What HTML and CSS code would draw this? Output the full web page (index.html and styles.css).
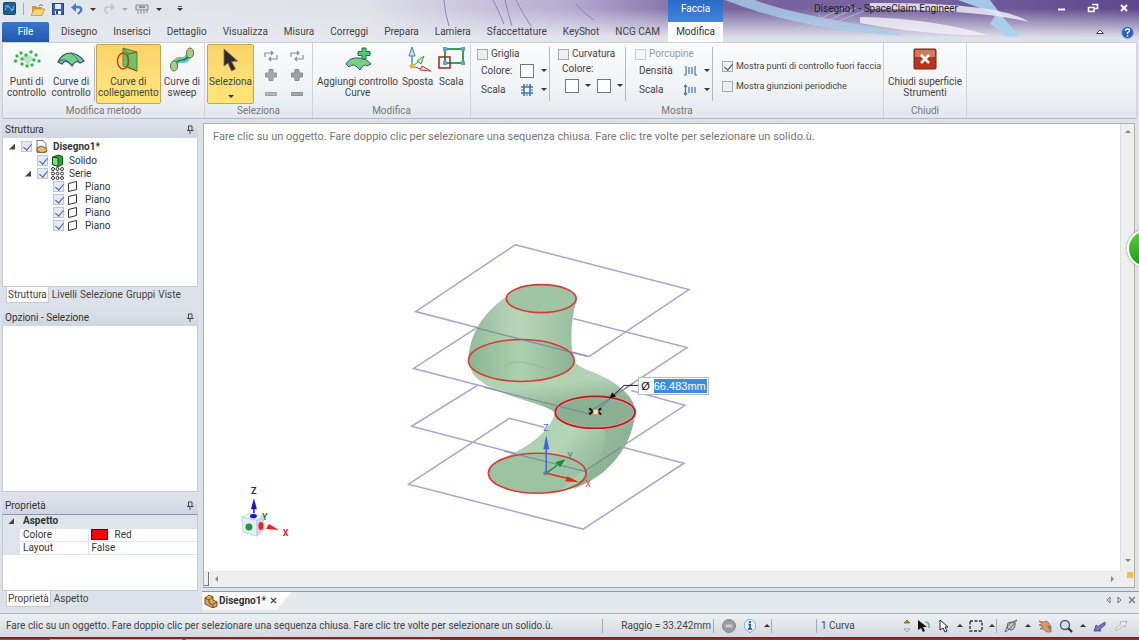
FILE: index.html
```html
<!DOCTYPE html>
<html lang="it">
<head>
    <meta charset="UTF-8">
    <meta name="viewport" content="width=device-width, initial-scale=1.0">
    <title>Disegno1 - SpaceClaim Engineer</title>
    <link rel="stylesheet" href="styles.css">
</head>
<body>
    <header class="header">
        <svg class="header-art" viewBox="0 0 1139 42" preserveAspectRatio="none">
            <path d="M444 0Q445 14 449 26M493 0Q500 14 504 24M505 0Q508 14 512 26M516 0Q524 16 531 26M576 4Q584 14 594 20" fill="none" stroke="#8d84bb" stroke-width="1"/>
            <path d="M725 0H755Q790 14 880 28L905 36Q800 30 725 0Z" fill="#a9cdea" opacity=".8"/>
            <path d="M958 0H990Q1000 14 1019 36L1008 37L990 24L996 14Z" fill="#a9d4ee" opacity=".9"/>
            <path d="M870 3Q1000 2 1029 22Q980 10 870 9Z" fill="#eceaf6" opacity=".85"/>
            <path d="M860 17Q930 18 988 35Q930 36 860 23Z" fill="#f2f1f8" opacity=".8"/>
            <path d="M795 30L850 5M802 32L856 8M812 32L866 10M818 14L835 28" stroke="#c9bfe0" stroke-width="1" opacity=".7"/>
        </svg>
        <div class="title-row">
            <div class="quick-access">
                <svg width="13" height="14" viewBox="0 0 13 14"><rect x=".5" y=".5" width="12" height="12" rx="1" fill="#1f5f99" stroke="#174777"/><path d="M2 8Q5 2 7 6T11 4M2 4h4M8 9l3-2" stroke="#77c6e6" fill="none"/></svg>
                <span class="qa-line"></span>
                <button class="qa-btn" aria-label="Apri"><svg width="14" height="13" viewBox="0 0 14 13"><path d="M1 3h4l1 1h5v8H1z" fill="#d99a2b"/><path d="M3 6h11l-3 6.500H0z" fill="#f6d27a" stroke="#c18a2c" stroke-width=".7"/><path d="M8 3q2-3 4 0" stroke="#4d7db0" fill="none"/></svg></button>
                <button class="qa-btn" aria-label="Salva"><svg width="12" height="12" viewBox="0 0 12 12"><rect x=".5" y=".5" width="11" height="11" fill="#3b5fb4" stroke="#2a4386"/><rect x="3" y="1" width="6" height="5" fill="#dfe9fa"/><rect x="3" y="8" width="6" height="3.500" fill="#fff"/><rect x="4" y="8" width="2" height="3" fill="#2a4386"/></svg></button>
                <button class="qa-btn" aria-label="Annulla"><svg width="12" height="12" viewBox="0 0 12 12"><path d="M3 4h4q4 0 3 4l-3 3" fill="none" stroke="#3f80d3" stroke-width="2.400"/><path d="M0 4.500L5 0v9z" fill="#3f80d3"/></svg></button>
                <i class="arrow"></i>
                <button class="qa-btn" aria-label="Ripeti"><svg width="12" height="12" viewBox="0 0 12 12"><path d="M9 4H5Q1 4 2 8l3 3" fill="none" stroke="#c3c7cd" stroke-width="1.500"/><path d="M12 4L8 0v8z" fill="#c3c7cd"/></svg></button>
                <i class="arrow pale"></i>
                <button class="qa-btn" aria-label="Stampa"><svg width="14" height="12" viewBox="0 0 14 12"><path d="M1 2h12v5H1zM3 8v3M6 7v4M9 7v4M12 7v3" stroke="#8b8f96" fill="#d5d7db"/><path d="M4 4h6" stroke="#555"/></svg></button>
                <i class="arrow"></i>
                <i class="arrow more"></i>
            </div>
            <h1 class="title">Disegno1 - SpaceClaim Engineer</h1>
            <div class="window-buttons">
                <button aria-label="Riduci"><svg width="12" height="12" viewBox="0 0 12 12"><path d="M2 7.500h7" stroke="#fff" stroke-width="2"/></svg></button>
                <button aria-label="Ripristina"><svg width="12" height="12" viewBox="0 0 12 12"><path d="M5 2.500h5.500v4H8" stroke="#fff" fill="none" stroke-width="1.600"/><path d="M1.500 5.500H7V9.500H1.500z" stroke="#fff" fill="none" stroke-width="1.600"/></svg></button>
                <button aria-label="Chiudi"><svg width="12" height="12" viewBox="0 0 12 12"><path d="M3 3l6 6M9 3l-6 6" stroke="#fff" stroke-width="2"/></svg></button>
            </div>
        </div>
        <nav class="tabs">
            <button class="tab file">File</button>
            <button class="tab">Disegno</button>
            <button class="tab">Inserisci</button>
            <button class="tab">Dettaglio</button>
            <button class="tab">Visualizza</button>
            <button class="tab">Misura</button>
            <button class="tab">Correggi</button>
            <button class="tab">Prepara</button>
            <button class="tab">Lamiera</button>
            <button class="tab">Sfaccettature</button>
            <button class="tab">KeyShot</button>
            <button class="tab">NCG CAM</button>
            <div class="context">
                <span class="context-name">Faccia</span>
                <button class="tab active">Modifica</button>
            </div>
            <div class="tabs-end">
                <svg width="10" height="8" viewBox="0 0 10 8"><path d="M1.500 5.500L5 2l3.500 3.500z" fill="#fff" stroke="#444"/></svg>
                <svg width="13" height="13" viewBox="0 0 13 13"><circle cx="6.500" cy="6.500" r="6" fill="#2b62b5" stroke="#8fb4e2"/><path d="M4.500 5q0-2 2-2t2 1.700q0 1-2 2V8M6.500 9v1.500" stroke="#fff" stroke-width="1.400" fill="none"/></svg>
            </div>
        </nav>
    </header>

    <section class="ribbon">
        <div class="group metodo">
            <div class="group-body">
                <button class="tool">
                    <svg width="28" height="26" viewBox="0 0 28 26"><path d="M8 11l6-4 7 4-6 7z" fill="#b9e6c2"/><g fill="#38b34a"><circle cx="2.500" cy="14" r="1.700"/><circle cx="4" cy="9" r="1.700"/><circle cx="8" cy="6" r="1.700"/><circle cx="13" cy="8" r="1.700"/><circle cx="18" cy="5" r="1.700"/><circle cx="23" cy="8" r="1.700"/><circle cx="26" cy="14" r="1.700"/><circle cx="9" cy="12" r="1.700"/><circle cx="21" cy="13" r="1.700"/><circle cx="9" cy="17" r="1.700"/><circle cx="14" cy="19" r="1.700"/><circle cx="19" cy="18" r="1.700"/></g></svg>
                    <span>Punti di<br>controllo</span>
                </button>
                <button class="tool">
                    <svg width="28" height="26" viewBox="0 0 28 26"><path d="M1 15Q5 6 14 6Q22 7 27 14L23 16Q19 12 15 19Q9 11 5 17z" fill="#7ccf7f" stroke="#2a4f86" stroke-width="1.200"/><path d="M1 15Q9 9 15 19M14 6Q18 8 23 16" fill="none" stroke="#2b62b5"/></svg>
                    <span>Curve di<br>controllo</span>
                </button>
                <span class="divider"></span>
                <button class="tool selected">
                    <svg width="28" height="26" viewBox="0 0 28 26"><path d="M9 1l14 4v19L9 19z" fill="#63c763" stroke="#8f6a26"/><path d="M9 1l5 6v12" fill="none" stroke="#3f8c3f"/><ellipse cx="9" cy="14" rx="5.500" ry="8" fill="none" stroke="#c2371e" stroke-width="1.400"/><path d="M14 7l9-2M14 20l9 4" stroke="#c2371e"/></svg>
                    <span>Curve di<br>collegamento</span>
                </button>
                <button class="tool">
                    <svg width="28" height="26" viewBox="0 0 28 26"><path d="M6 18Q9 12 14 13T22 5" fill="none" stroke="#62cf8c" stroke-width="6"/><path d="M6 20Q8 13 14 13T22 5" fill="none" stroke="#24579b" stroke-width="1.200"/><ellipse cx="6" cy="19" rx="3.500" ry="5" fill="#8edb8e" stroke="#a8512b"/><ellipse cx="22" cy="6" rx="3.500" ry="5" fill="#8edb8e" stroke="#a8512b"/></svg>
                    <span>Curve di<br>sweep</span>
                </button>
            </div>
            <h2>Modifica metodo</h2>
        </div>
        <div class="group seleziona">
            <div class="group-body">
                <button class="tool selected">
                    <svg width="28" height="26" viewBox="0 0 28 26"><path d="M7 2v17l4-3 3.500 8 4-2-4-7.500 6-.500z" fill="#2f2b2b" stroke="#7b6a4a" stroke-width=".8"/></svg>
                    <span>Seleziona</span>
                    <i class="arrow"></i>
                </button>
                <div class="mini-grid">
                    <svg width="14" height="12" viewBox="0 0 14 12"><path d="M1 7V3h8M7 1l2 2-2 2M13 5v4H5M7 7L5 9l2 2" fill="none" stroke="#8a8a8a" stroke-width="1.200"/></svg>
                    <svg width="14" height="12" viewBox="0 0 14 12"><path d="M1 7V3h8M7 1l2 2-2 2M13 5v4H5M7 7L5 9l2 2" fill="none" stroke="#8a8a8a" stroke-width="1.200"/></svg>
                    <svg width="12" height="12" viewBox="0 0 12 12"><path d="M4 .500h4V4h3.500v4H8v3.500H4V8H.500V4H4z" fill="#a8a8a8" stroke="#929292"/></svg>
                    <svg width="12" height="12" viewBox="0 0 12 12"><path d="M4 .500h4V4h3.500v4H8v3.500H4V8H.500V4H4z" fill="#a0a0a0" stroke="#888"/></svg>
                    <svg width="12" height="12" viewBox="0 0 12 12"><path d="M.500 4.500h11v3H.500z" fill="#b8b8b8" stroke="#a0a0a0"/></svg>
                    <svg width="12" height="12" viewBox="0 0 12 12"><path d="M.500 4.500h11v3H.500z" fill="#a8a8a8" stroke="#909090"/></svg>
                </div>
            </div>
            <h2>Seleziona</h2>
        </div>
        <div class="group modifica">
            <div class="group-body">
                <button class="tool">
                    <svg width="28" height="26" viewBox="0 0 28 26"><path d="M2 17Q6 10 14 11Q22 11 27 17L23 19Q20 16 16 23Q10 15 5 20z" fill="#7ccf7f" stroke="#2a4f86"/><path d="M18 1h4v3.500h4v4h-4V12h-4V8.500h-4v-4h4z" fill="#52c978" stroke="#1e7237"/></svg>
                    <span>Aggiungi controllo<br>Curve</span>
                </button>
                <button class="tool">
                    <svg width="28" height="26" viewBox="0 0 28 26"><path d="M8 20V8" stroke="#5c8ac6" stroke-width="1.500"/><path d="M8 0l3 9H5z" fill="#cfe1f5" stroke="#4b7dbb"/><path d="M8 20l7-6" stroke="#4c9a4c"/><path d="M20 9l-3 8-4-3z" fill="#c7ebc4" stroke="#4c9a4c"/><path d="M8 19l9 3" stroke="#b5433b"/><path d="M27 24l-11-1 2-4z" fill="#f7d5d0" stroke="#b5433b"/><circle cx="8" cy="19" r="2.500" fill="#d8b84c"/></svg>
                    <span>Sposta</span>
                </button>
                <button class="tool">
                    <svg width="28" height="26" viewBox="0 0 28 26"><path d="M8 2h18v14H8z" fill="none" stroke="#2ba555" stroke-width="2"/><path d="M2 10h11v11H2z" fill="none" stroke="#982a2a" stroke-width="1.500"/><g fill="#6f9bd8"><path d="M6 0h4v4H6zM24 0h4v4h-4zM24 14h4v4h-4zM6 14h4v4H6z"/></g></svg>
                    <span>Scala</span>
                </button>
            </div>
            <h2>Modifica</h2>
        </div>
        <div class="group mostra">
            <div class="group-body">
                <div class="option-set griglia">
                    <label class="check"><input type="checkbox"> Griglia</label>
                    <div class="option"><span>Colore:</span><button class="swatch" aria-label="Colore griglia"></button><i class="arrow"></i></div>
                    <div class="option"><span>Scala</span><svg width="14" height="14" viewBox="0 0 14 14"><path d="M4 1v12M10 1v12M1 4h12M1 10h12" stroke="#3b73b9" stroke-width="1.600"/><path d="M5 5h4v4H5z" fill="#fff"/><path d="M7 1v2M7 11v2M1 7h2M11 7h2" stroke="#3b73b9"/></svg><i class="arrow"></i></div>
                </div>
                <span class="divider"></span>
                <div class="option-set curvatura">
                    <label class="check"><input type="checkbox"> Curvatura</label>
                    <div class="option"><span>Colore:</span></div>
                    <div class="option swatches"><button class="swatch" aria-label="Colore minimo"></button><i class="arrow"></i><button class="swatch" aria-label="Colore massimo"></button><i class="arrow"></i></div>
                </div>
                <span class="divider"></span>
                <div class="option-set porcupine">
                    <label class="check disabled"><input type="checkbox" disabled> Porcupine</label>
                    <div class="option"><span>Densità</span><svg width="14" height="12" viewBox="0 0 14 12"><path d="M3 1v9H1M6 2v7M9 2v7M12 1v9h2" stroke="#3b73b9" fill="none" stroke-width="1.200"/></svg><i class="arrow"></i></div>
                    <div class="option"><span>Scala</span><svg width="14" height="12" viewBox="0 0 14 12"><path d="M2.500 1v10M1 3l1.500-2L4 3M1 9l1.500 2L4 9M6 3v6M9 3v6M12 3v6" stroke="#3b73b9" fill="none" stroke-width="1.200"/></svg><i class="arrow"></i></div>
                </div>
                <span class="divider"></span>
                <div class="option-set punti">
                    <label class="check"><input type="checkbox" checked> Mostra punti di controllo fuori faccia</label>
                    <label class="check"><input type="checkbox"> Mostra giunzioni periodiche</label>
                </div>
            </div>
            <h2>Mostra</h2>
        </div>
        <div class="group chiudi">
            <div class="group-body">
                <button class="tool">
                    <svg width="28" height="26" viewBox="0 0 28 26"><rect x="3" y="2" width="22" height="20" rx="1" fill="#b8341c" stroke="#7b2414"/><path d="M4 3h20v7H4z" fill="#cf7a62"/><path d="M10 8l8 8M18 8l-8 8" stroke="#fff" stroke-width="2.500"/></svg>
                    <span>Chiudi superficie<br>Strumenti</span>
                </button>
            </div>
            <h2>Chiudi</h2>
        </div>
    </section>

    <main class="main">
        <aside class="sidebar">
            <section class="panel struttura">
                <h3>Struttura <svg width="8" height="9" viewBox="0 0 8 9"><path d="M2.500 1v4M6 1v4M2 1h4M1 5.500h6.500M4 6v3" stroke="#444" fill="none"/></svg></h3>
                <ul class="tree">
                    <li class="root"><i class="twist"></i><input type="checkbox" id="t1" checked><svg width="13" height="13" viewBox="0 0 13 13"><path d="M2 .500h6l3 3v9H2z" fill="#fff" stroke="#777"/><path d="M2 8l4-2 5 2 1 3-5 2-5-2z" fill="#e8b67a" stroke="#8a5a2a"/></svg><label for="t1">Disegno1*</label></li>
                    <li class="level-2"><i class="twist none"></i><input type="checkbox" id="t2" checked><svg width="13" height="13" viewBox="0 0 13 13"><path d="M1.500 3l6-2 4 1.500v8l-4 2-6-2z" fill="#29a832" stroke="#134f17"/><path d="M1.500 3l5.500 1v8.500l-5.500-2z" fill="#7be07f" stroke="#134f17"/></svg><label for="t2">Solido</label></li>
                    <li class="level-2"><i class="twist"></i><input type="checkbox" id="t3" checked><svg width="13" height="13" viewBox="0 0 13 13"><g fill="#fff" stroke="#333"><circle cx="2" cy="2" r="1.500"/><circle cx="6.500" cy="2" r="1.500"/><circle cx="11" cy="2" r="1.500"/><circle cx="2" cy="6.500" r="1.500"/><circle cx="6.500" cy="6.500" r="1.500"/><circle cx="11" cy="6.500" r="1.500"/><circle cx="2" cy="11" r="1.500"/><circle cx="6.500" cy="11" r="1.500"/><circle cx="11" cy="11" r="1.500"/></g></svg><label for="t3">Serie</label></li>
                    <li class="level-3"><i class="twist none"></i><input type="checkbox" id="t4" checked><svg width="13" height="13" viewBox="0 0 13 13"><path d="M1.500 3.500l8-2v8l-8 2z" fill="#fff" stroke="#333"/></svg><label for="t4">Piano</label></li>
                    <li class="level-3"><i class="twist none"></i><input type="checkbox" id="t5" checked><svg width="13" height="13" viewBox="0 0 13 13"><path d="M1.500 3.500l8-2v8l-8 2z" fill="#fff" stroke="#333"/></svg><label for="t5">Piano</label></li>
                    <li class="level-3"><i class="twist none"></i><input type="checkbox" id="t6" checked><svg width="13" height="13" viewBox="0 0 13 13"><path d="M1.500 3.500l8-2v8l-8 2z" fill="#fff" stroke="#333"/></svg><label for="t6">Piano</label></li>
                    <li class="level-3"><i class="twist none"></i><input type="checkbox" id="t7" checked><svg width="13" height="13" viewBox="0 0 13 13"><path d="M1.500 3.500l8-2v8l-8 2z" fill="#fff" stroke="#333"/></svg><label for="t7">Piano</label></li>
                </ul>
                <div class="panel-tabs">
                    <button class="active">Struttura</button>
                    <button>Livelli</button>
                    <button>Selezione</button>
                    <button>Gruppi</button>
                    <button>Viste</button>
                </div>
            </section>
            <section class="panel opzioni">
                <h3>Opzioni - Selezione <svg width="8" height="9" viewBox="0 0 8 9"><path d="M2.500 1v4M6 1v4M2 1h4M1 5.500h6.500M4 6v3" stroke="#444" fill="none"/></svg></h3>
                <div class="panel-body"></div>
            </section>
            <section class="panel proprieta">
                <h3>Proprietà <svg width="8" height="9" viewBox="0 0 8 9"><path d="M2.500 1v4M6 1v4M2 1h4M1 5.500h6.500M4 6v3" stroke="#444" fill="none"/></svg></h3>
                <div class="panel-body">
                    <table class="props">
                        <tr class="props-head"><td><i class="twist"></i></td><th colspan="2">Aspetto</th></tr>
                        <tr><td></td><td>Colore</td><td><span class="red-box"></span>Red</td></tr>
                        <tr><td></td><td>Layout</td><td>False</td></tr>
                    </table>
                </div>
                <div class="panel-tabs">
                    <button class="active">Proprietà</button>
                    <button>Aspetto</button>
                </div>
            </section>
        </aside>

        <div class="work">
            <div class="viewport">
                <div class="canvas">
                    <p class="hint">Fare clic su un oggetto. Fare doppio clic per selezionare una sequenza chiusa. Fare clic tre volte per selezionare un solido.ù.</p>
                    <svg class="scene" viewBox="205 124 916 448">
                        <defs>
                            <linearGradient id="upper" x1="0" x2="1">
                                <stop offset="0" stop-color="#94b998"/>
                                <stop offset=".45" stop-color="#b9d6bb"/>
                                <stop offset="1" stop-color="#98bd9c"/>
                            </linearGradient>
                            <linearGradient id="lower" x1="0" y1="0" x2="1" y2=".5">
                                <stop offset="0" stop-color="#9cc3a1"/>
                                <stop offset=".55" stop-color="#b5d6b9"/>
                                <stop offset="1" stop-color="#86aa8b"/>
                            </linearGradient>
                            <linearGradient id="arm" x1="0" y1="0" x2=".3" y2="1">
                                <stop offset="0" stop-color="#a5c9a9"/>
                                <stop offset=".6" stop-color="#b4d3b6"/>
                                <stop offset="1" stop-color="#87a98c"/>
                            </linearGradient>
                            <linearGradient id="cut" x1="0" x2="1">
                                <stop offset="0" stop-color="#83b38b"/>
                                <stop offset=".5" stop-color="#a8cfac"/>
                                <stop offset="1" stop-color="#87ae8d"/>
                            </linearGradient>
                        </defs>
                        <!-- piani -->
                        <g fill="none" stroke="#a7a5d1" stroke-width="1.500">
                            <path d="M516 245L690 290L590 357L416 312Z"/>
                            <path d="M476 329L414 369L588 414L688 348L574 319"/>
                            <path d="M478 386L412 427L585 472L686 406L632 391"/>
                            <path d="M545 428L510 419L409 485L584 530L685 464L620 447"/>
                        </g>
                        <!-- solido -->
                        <path d="M556 412C553 430 530 449 500 460L489 474C489 488 520 494 550 493C570 493 590 484 604 473C622 458 634 438 636 413Z" fill="url(#lower)"/>
                        <path d="M469 360C470 378 485 386 505 394C525 402 545 405 557 414C580 424 625 428 636 413C637 396 614 380 592 372C582 368 577 366 574 360C550 340 490 340 469 360Z" fill="url(#arm)"/>
                        <path d="M507 297C488 311 472 328 469 358C480 390 560 390 575 364C570 342 572 318 578 299Z" fill="url(#upper)"/>
                        <path d="M604 428C610 445 602 464 574 490C606 478 632 450 636 415C626 424 616 428 604 428Z" fill="#8fb394" opacity=".7"/>
                        <ellipse cx="542" cy="299" rx="35" ry="14" fill="#9fc5a5" stroke="#d83a36" stroke-width="1.600"/>
                        <ellipse cx="522" cy="361" rx="53" ry="21" fill="url(#cut)" fill-opacity=".75" stroke="#d83a36" stroke-width="1.600"/>
                        <path d="M505 367Q512 361 524 363T550 370" fill="none" stroke="#87aa8c" opacity=".6"/>
                        <ellipse cx="538" cy="474" rx="49" ry="20" fill="#9cc4a2" stroke="#d83a36" stroke-width="1.600"/>
                        <path d="M562 491Q576 478 585 471Q587 483 562 491Z" fill="#b4d3b6" opacity=".7"/>
                        <ellipse cx="596" cy="413" rx="40" ry="16" fill="#8bb091" stroke="#f09c96" stroke-width="3"/>
                        <ellipse cx="596" cy="413" rx="40" ry="16" fill="none" stroke="#a81f25" stroke-width="1.600"/>
                        <path d="M476 328L588 357M485 388L588 414L634 384M505 452L585 472L622 448" fill="none" stroke="#66789c" stroke-width="1.300" opacity=".65"/>
                        <!-- quota -->
                        <path d="M598 412L625 386" stroke="#6c7b9c"/>
                        <path d="M614 396L625 386H639" stroke="#222" fill="none"/>
                        <path d="M610 399l3-6 4 4z" fill="#111"/>
                        <path d="M590 409l4 3-4 3M602 409l-4 3 4 3" stroke="#111" stroke-width="2" fill="none"/>
                        <rect x="594" y="410" width="5" height="5" fill="#f8e3a0" stroke="#c69a4a" stroke-width=".7"/>
                        <!-- origine -->
                        <g class="axis">
                            <path d="M547 474V446" stroke="#4566d6" stroke-width="1.500"/>
                            <path d="M547 436l3 14h-6z" fill="#4566d6"/>
                            <text x="544" y="432" fill="#4566d6">Z</text>
                            <path d="M547 474L558 466" stroke="#1f8a36" stroke-width="1.500"/>
                            <path d="M566 460l-5 8-5-5z" fill="#1f8a36"/>
                            <text x="568" y="460" fill="#1f9a46">Y</text>
                            <path d="M547 474L568 479" stroke="#e8281e" stroke-width="1.500"/>
                            <path d="M580 483l-14-1 2-5z" fill="#e8281e"/>
                            <text x="586" y="488" fill="#f04a40">X</text>
                            <circle cx="546" cy="474" r="2" fill="#667c96"/>
                        </g>
                        <!-- orientamento -->
                        <g class="axis bold">
                            <path d="M242 518l8-4 13 3-6 5z" fill="#f5f8fd" stroke="#b8c6d4" stroke-width=".7"/>
                            <path d="M242 518l15 3v16l-14-4z" fill="#e4eef8" stroke="#b8c6d4" stroke-width=".7"/>
                            <path d="M257 521l7-4v14l-7 6z" fill="#cbd9e8" stroke="#b8c6d4" stroke-width=".7"/>
                            <circle cx="249" cy="528" r="3.500" fill="#229a35"/>
                            <ellipse cx="261" cy="527" rx="2.500" ry="4" fill="#e62525"/>
                            <ellipse cx="253.500" cy="517" rx="3.500" ry="2.200" fill="#1717c8"/>
                            <path d="M254 514V508" stroke="#1717c8" stroke-width="1.500"/>
                            <path d="M254 499l3 11h-6z" fill="#1717c8"/>
                            <text x="251" y="495" fill="#1717c8">Z</text>
                            <text x="262" y="521" fill="#1c7b39">Y</text>
                            <path d="M279 531l-13-1 3-5z" fill="#e62525"/>
                            <text x="283" y="537" fill="#e62525">X</text>
                        </g>
                    </svg>
                    <label class="dimension">Ø <input type="text" value="66.483mm"></label>
                </div>
                <div class="v-scroll"><i class="arrow up"></i><i class="arrow grip"></i></div>
                <div class="h-scroll"><i class="thumb"></i><i class="side left"></i><i class="side right"></i></div>
                <div class="corner"></div>
            </div>
            <div class="doc-tabs">
                <button class="doc-tab"><svg width="14" height="14" viewBox="0 0 14 14"><path d="M1 4l4-3 4 2v3l4 2v4l-4 2-8-4z" fill="#e0a662" stroke="#75481c"/><path d="M1 4l4 2v3l4 2v3M5 6l4-3M9 10l4-2" fill="none" stroke="#75481c"/></svg><b>Disegno1*</b><svg width="8" height="8" viewBox="0 0 8 8"><path d="M1 1l5 5M6 1L1 6" stroke="#444" stroke-width="1.200"/></svg></button>
                <svg class="doc-nav" width="30" height="10" viewBox="0 0 30 10"><path d="M5 2L2 5l3 3zM13 2l3 3-3 3z" fill="none" stroke="#777"/><path d="M24 2l6 6M30 2l-6 6" stroke="#777" stroke-width="1.300"/></svg>
            </div>
        </div>
    </main>

    <footer class="status">
        <span class="status-hint">Fare clic su un oggetto. Fare doppio clic per selezionare una sequenza chiusa. Fare clic tre volte per selezionare un solido.ù.</span>
        <span class="status-radius">Raggio = 33.242mm</span>
        <div class="status-info">
            <svg width="14" height="14" viewBox="0 0 14 14"><circle cx="7" cy="7" r="6.500" fill="#9c9c9c" stroke="#8a8a8a"/><path d="M3.500 5.500h7v3h-7z" fill="#c9c9c9"/></svg>
            <svg width="14" height="14" viewBox="0 0 14 14"><path d="M7 .500a6 6 0 0 1 2 11.500l-2 2-2-2A6 6 0 0 1 7 .500z" fill="#e8f1fb" stroke="#85add9"/><path d="M7 2v2M5.500 5.500H7V10M5 10h4" stroke="#1b53a8" stroke-width="1.700" fill="none"/></svg>
            <i class="arrow up"></i>
        </div>
        <span class="status-count">1 Curva</span>
        <div class="status-tools">
            <svg width="8" height="14" viewBox="0 0 8 14"><path d="M1 4l3-3 3 3z" fill="#b0852d" stroke="#6a5220" stroke-width=".7"/><path d="M1 10l3 3 3-3z" fill="#eee" stroke="#888" stroke-width=".7"/></svg>
            <svg width="14" height="14" viewBox="0 0 14 14"><path d="M1 1v10l3-2 2 4 2-1-2-4h4z" fill="#111"/><path d="M8 3q5 0 4 6" stroke="#62b56b" stroke-width="1.500" fill="none"/></svg>
            <svg width="14" height="14" viewBox="0 0 14 14"><path d="M3 1v10l3-2 2 4 2-1-2-4h3z" fill="#fff" stroke="#222"/></svg>
            <i class="arrow up"></i>
            <svg width="14" height="14" viewBox="0 0 14 14"><path d="M1 2h12v10H1z" fill="none" stroke="#333" stroke-width="1.400" stroke-dasharray="3 1.500"/></svg>
            <i class="arrow up"></i>
        </div>
        <div class="status-view">
            <svg width="14" height="14" viewBox="0 0 14 14"><path d="M3 7q0-4 4-4l4 1v3q-1 4-4 4-4 0-4-4z" fill="#c4c8ce" stroke="#666"/><path d="M1 13Q6 11 13 1Q3 4 1 13z" fill="none" stroke="#666"/></svg>
            <i class="arrow up"></i>
            <svg width="14" height="14" viewBox="0 0 14 14"><path d="M1 2l4 1 4-1 4 5v6H9L5 10H2l3-2-4-2 3-1z" fill="#d79a6c" stroke="#8c5a38" stroke-width=".7"/><path d="M9 7h4v5z" fill="#777"/></svg>
            <svg width="14" height="14" viewBox="0 0 14 14"><circle cx="6" cy="6" r="4.500" fill="#cfe0f3" stroke="#4a5770" stroke-width="1.400"/><path d="M9 9l4 4" stroke="#333" stroke-width="2.200"/></svg>
            <i class="arrow up"></i>
            <svg width="14" height="14" viewBox="0 0 14 14"><path d="M1 12l2-6 2 1.500L12 3v3L7 10l1 2z" fill="#7b77bd" stroke="#3f3c80" stroke-width=".8"/></svg>
            <svg width="14" height="14" viewBox="0 0 14 14"><path d="M13 2l-2 6-2-1.500L2 12v-3l5-4-1-2z" fill="#eee" stroke="#aaa" stroke-width=".8"/></svg>
        </div>
    </footer>
    <div class="taskbar"></div>
    <div class="bubble"></div>
</body>
</html>
```
FILE: styles.css
```css
* {
    box-sizing: border-box;
}
body {
    margin: 0;
    height: 100vh;
    display: flex;
    flex-direction: column;
    overflow: hidden;
    position: relative;
    background: #dde2ea;
    color: #444;
    font: 10px/12px Roboto, "Liberation Sans", sans-serif;
}
button {
    padding: 0;
    border: none;
    background: none;
    color: inherit;
    font: inherit;
}
h1, h2, h3, p, ul {
    margin: 0;
    padding: 0;
    font-size: 10px;
    font-weight: normal;
}
svg {
    display: block;
    flex: none;
}
.arrow {
    flex: none;
    border: 3px solid transparent;
    border-top-color: #333;
    border-bottom: none;
}
.arrow.up {
    border-top: none;
    border-bottom: 3px solid #333;
}
.arrow.pale {
    border-top-color: #aaa;
}
.arrow.more {
    margin-left: 8px;
    box-shadow: 0 -3px 0 -1px #555;
}

/* header */
.header {
    position: relative;
    background: linear-gradient(to bottom, rgba(229, 232, 238, 0) 20%, rgba(229, 232, 238, 0.95) 90%), linear-gradient(to right, #e3e7eb 0, #e0e1e9 32%, #b5abd0 50%, #76629e 62%, #77649f 80%, #5f478c 100%);
}
.header-art {
    position: absolute;
    width: 100%;
    height: 100%;
}
.title-row {
    position: relative;
    height: 22px;
    display: flex;
    align-items: flex-start;
}
.quick-access {
    flex: 1;
    display: flex;
    align-items: center;
    gap: 7px;
    height: 18px;
    padding-left: 3px;
}
.qa-line {
    width: 1px;
    height: 12px;
    background: #aaa;
}
.title {
    color: #222;
    padding-top: 3px;
}
.window-buttons {
    width: 181px;
    display: flex;
    justify-content: flex-end;
    gap: 19px;
    padding: 2px 9px 0 0;
}
.tabs {
    position: relative;
    height: 20px;
    display: flex;
    padding-left: 2px;
}
.tab {
    padding: 0 8px;
    color: #444;
}
.tab.file {
    width: 47px;
    margin-right: 4px;
    background: linear-gradient(#3a78cd, #2158ae);
    color: #fff;
    border-radius: 2px 2px 0 0;
}
.context {
    position: relative;
    display: flex;
}
.context-name {
    position: absolute;
    left: 0;
    right: 0;
    bottom: 100%;
    height: 22px;
    padding-top: 3px;
    background: linear-gradient(#2b69c6, #3f86dd);
    color: #fff;
    text-align: center;
}
.tab.active {
    width: 55px;
    padding: 0;
    background: #fbfcfd;
    color: #333;
}
.tabs-end {
    margin-left: auto;
    display: flex;
    align-items: center;
    gap: 16px;
    padding-right: 5px;
}

/* ribbon */
.ribbon {
    display: flex;
    height: 77px;
    margin: 0 2px;
    background: linear-gradient(#fbfcfd, #f1f3f6 60%, #e3e7ed);
    border: 1px solid #ccd1d9;
    border-bottom-color: #b5bcc7;
    border-radius: 2px;
}
.group {
    display: flex;
    flex-direction: column;
    border-right: 1px solid #cfd4db;
}
.group h2 {
    color: #777;
    text-align: center;
    line-height: 14px;
}
.group-body {
    flex: 1;
    display: flex;
    padding: 1px 2px 0;
}
.metodo {
    width: 202px;
}
.metodo .group-body {
    justify-content: space-between;
}
.seleziona {
    width: 108px;
}
.modifica {
    width: 158px;
}
.mostra {
    width: 413px;
}
.chiudi {
    width: 83px;
}
.chiudi .tool {
    flex: 1;
}
.tool {
    display: flex;
    flex-direction: column;
    align-items: center;
    height: 60px;
    padding: 2px 1px;
    border: 1px solid transparent;
    border-radius: 2px;
    line-height: 11px;
    white-space: nowrap;
}
.tool span {
    margin-top: 3px;
}
.tool .arrow {
    margin-top: 8px;
}
.tool.selected {
    background: linear-gradient(#fbd467, #fde07a 60%, #ffe572);
    border-color: #c9a452;
}
.divider {
    flex: none;
    width: 1px;
    height: 54px;
    margin-top: 3px;
    background: #b4b8be;
}
.mini-grid {
    flex: 1;
    display: grid;
    grid-template-columns: 26px 26px;
    justify-content: center;
    align-content: space-between;
    justify-items: center;
    padding: 6px 0 4px 4px;
}
.check {
    display: flex;
    align-items: center;
    gap: 3px;
    white-space: nowrap;
}
input[type="checkbox"] {
    appearance: none;
    flex: none;
    position: relative;
    width: 11px;
    height: 11px;
    margin: 0;
    background: #eceef1;
    border: 1px solid #a5a9b0;
}
input[type="checkbox"]:checked::after {
    content: "";
    position: absolute;
    left: 3px;
    top: 0;
    width: 4px;
    height: 7px;
    border: solid #4c5a9a;
    border-width: 0 1px 1px 0;
    transform: rotate(40deg);
}
.mostra input:checked::after {
    border-color: #444;
}
.check.disabled {
    color: #999;
}
.check.disabled input {
    border-color: #ccc;
    background: #f5f5f5;
}
.option-set {
    display: flex;
    flex: none;
    flex-direction: column;
    gap: 2px;
    padding-top: 4px;
}
.option {
    display: flex;
    align-items: center;
    gap: 7px;
    height: 17px;
    padding-left: 4px;
}
.option span {
    margin-right: auto;
}
.swatch {
    flex: none;
    width: 14px;
    height: 14px;
    border: 1px solid #777;
    background: #fff;
}
.griglia {
    width: 76px;
    padding-left: 4px;
    padding-right: 2px;
}
.curvatura {
    width: 75px;
    padding-left: 8px;
    padding-right: 2px;
    gap: 0;
}
.curvatura .option {
    gap: 6px;
}
.swatches {
    justify-content: flex-end;
}
.porcupine {
    width: 86px;
    padding-left: 9px;
    padding-right: 2px;
}
.punti {
    padding: 16px 0 0 9px;
    gap: 8px;
    font-size: 9px;
}

/* left panels */
.main {
    flex: 1;
    min-height: 0;
    display: flex;
}
.sidebar {
    width: 198px;
    padding-top: 2px;
    padding-left: 2px;
    display: flex;
    flex-direction: column;
    gap: 5px;
}
.panel {
    display: flex;
    flex-direction: column;
}
.panel h3 {
    display: flex;
    justify-content: space-between;
    align-items: center;
    height: 17px;
    padding: 0 4px 0 3px;
    background: linear-gradient(#dde2ea, #cfd6e2);
    color: #333;
}
.tree, .panel-body {
    flex: 1;
    background: #fff;
    border: 1px solid #c5cbd5;
    border-top: none;
}
.opzioni, .proprieta .panel-body, .struttura {
    flex: none;
}
.struttura {
    height: 183px;
}
.opzioni {
    flex: 1;
}
.proprieta {
    height: 116px;
}
.proprieta .panel-body {
    height: 77px;
    border-top: 1px solid #8d96a5;
}
.tree {
    list-style: none;
    padding-top: 1px;
}
.tree li {
    display: flex;
    align-items: center;
    gap: 3px;
    height: 13px;
    padding-left: 6px;
    color: #333;
}
.tree .root {
    height: 15px;
    font-weight: bold;
}
.tree .level-2 {
    padding-left: 22px;
}
.tree .level-3 {
    padding-left: 38px;
}
.tree label {
    margin-left: 2px;
}
.tree input[type="checkbox"] {
    background: #e3e9f3;
    border-color: #c0c8d6;
}
.twist {
    display: block;
    width: 6px;
    height: 6px;
    margin-right: 3px;
    background: #444;
    clip-path: polygon(100% 0, 100% 100%, 0 100%);
}
.twist.none {
    visibility: hidden;
}
.panel-tabs {
    display: flex;
    gap: 3px;
    height: 17px;
    padding-left: 4px;
}
.panel-tabs button {
    height: 16px;
}
.panel-tabs .active {
    padding: 0 1px;
    background: #fff;
    border: 1px solid #c5cbd5;
    border-top: none;
}
.props {
    width: 100%;
    border-collapse: collapse;
    color: #333;
}
.props td, .props th {
    height: 13px;
    padding: 0 0 0 3px;
    border-bottom: 1px solid #dfe3ea;
    text-align: left;
    line-height: 12px;
}
.props td:first-child {
    width: 17px;
    padding-left: 5px;
    background: #e0e4ec;
}
.props td:nth-child(2) {
    width: 68px;
    border-right: 1px solid #dfe3ea;
}
.props .props-head th {
    background: #e0e4ec;
}
.red-box {
    display: inline-block;
    width: 17px;
    height: 11px;
    margin: 0 7px 0 -1px;
    background: #f00;
    border: 1px solid #600;
    vertical-align: top;
}

/* drawing area */
.work {
    flex: 1;
    min-width: 0;
    display: flex;
    flex-direction: column;
    padding: 4px 0 0 4px;
}
.viewport {
    flex: 1;
    min-height: 0;
    display: grid;
    grid-template-columns: 1fr 14px;
    grid-template-rows: 1fr 16px;
    margin: 0 4px 0 1px;
    border: 1px solid #b3b0a4;
    border-bottom-color: #9aa2b0;
    background: #eee;
}
.canvas {
    position: relative;
    min-height: 0;
    background: #fff;
}
.hint {
    position: absolute;
    left: 9px;
    top: 6px;
    font-size: 11px;
    line-height: 14px;
    color: #777;
}
.scene {
    width: 100%;
    height: 100%;
}
.axis text {
    font: 9px Roboto, sans-serif;
}
.axis.bold text {
    font-weight: bold;
}
.dimension {
    position: absolute;
    left: 47.400%;
    top: 56.600%;
    display: flex;
    align-items: center;
    gap: 4px;
    height: 18px;
    padding: 0 1px 0 2px;
    background: #fff;
    border: 1px solid #b5bac3;
    color: #111;
    font: 11px "Liberation Sans", sans-serif;
}
.dimension input {
    width: 53px;
    height: 14px;
    padding: 0;
    border: none;
    background: #3e8ddd;
    color: #fff;
    font: 11px "Liberation Sans", sans-serif;
}
.v-scroll {
    display: flex;
    flex-direction: column;
    justify-content: space-between;
    align-items: center;
    padding: 6px 0 9px;
    border-left: 1px solid #ddd;
}
.v-scroll .arrow {
    border-bottom-color: #888;
}
.v-scroll .grip {
    border-top-color: #888;
}
.h-scroll {
    display: flex;
    align-items: center;
    gap: 6px;
    padding: 0 6px 0 0;
}
.thumb {
    width: 5px;
    height: 14px;
    border-right: 1px solid #777;
    border-bottom: 1px solid #777;
}
.side {
    border: 3px solid transparent;
    border-left: none;
    border-right: 3px solid #888;
}
.side.right {
    margin-left: auto;
    border-right: none;
    border-left: 3px solid #888;
}
.corner {
    width: 6px;
    height: 6px;
    margin: 1px 0 0 7px;
    background: #efc04d;
}
.doc-tabs {
    display: flex;
    justify-content: space-between;
    height: 22px;
    margin-top: 3px;
    border-top: 1px solid #8f99a8;
    background: #e4e9ee;
}
.doc-tab {
    display: flex;
    align-items: center;
    gap: 1px;
    height: 18px;
    padding: 0 14px 0 2px;
    background: linear-gradient(#fff, #f4f6f9);
    clip-path: polygon(0 0, 100% 0, calc(100% - 15px) 100%, 0 100%);
    color: #333;
}
.doc-tab svg:last-child {
    margin-left: 3px;
}
.doc-nav {
    margin: 3px 4px 0 0;
}

/* status bar */
.status {
    display: flex;
    align-items: center;
    height: 24px;
    border-top: 1px solid #aab2be;
    background: linear-gradient(#eef1f4, #d3d8df);
    white-space: nowrap;
}
.status > * {
    height: 14px;
    line-height: 14px;
}
.status-hint {
    flex: 1;
    padding-left: 6px;
    border-right: 1px solid #aaa;
}
.status-radius {
    width: 111px;
    text-align: right;
    padding-right: 2px;
    border-right: 1px solid #aaa;
}
.status-info {
    display: flex;
    align-items: center;
    gap: 7px;
    width: 58px;
    padding-left: 8px;
    border-right: 1px solid #aaa;
}
.status-count {
    width: 87px;
    margin-left: 44px;
    padding-left: 4px;
    border-left: 1px solid #aaa;
}
.status-tools, .status-view {
    display: flex;
    align-items: center;
}
.status-tools {
    width: 94px;
    gap: 6px;
    border-right: 1px solid #aaa;
}
.status-view {
    width: 142px;
    padding-left: 7px;
    gap: 7px;
}
.taskbar {
    height: 3px;
    background: linear-gradient(to right, #b0454c 50px, #e8a0a4 50px, #e8a0a4 182px, #b0454c 182px, #b0454c 186px, #e8a0a4 186px, #e8a0a4 440px, #a02a2e 440px);
    border-top: 2px solid #8f1f24;
}
.bubble {
    position: absolute;
    right: -27px;
    top: 229px;
    width: 39px;
    height: 39px;
    border: 2px solid #fff;
    border-radius: 50%;
    background: linear-gradient(#5fd03a, #1b9a1b);
    box-shadow: 0 0 2px #666;
}
```
